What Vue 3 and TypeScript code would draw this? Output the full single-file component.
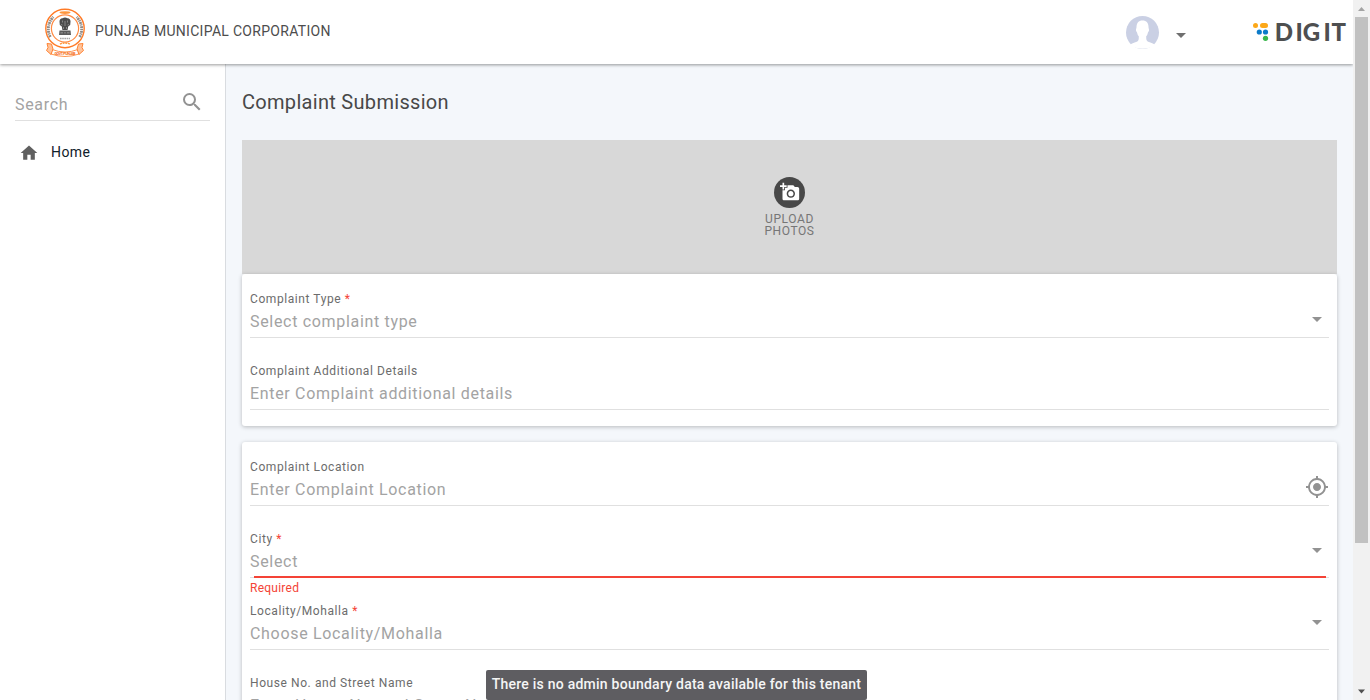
<script setup lang="ts">
interface Field {
  label: string
  placeholder: string
  required?: boolean
  icon?: 'caret' | 'locate'
  raised?: boolean
  error?: string
}

const cards: Field[][] = [
  [
    { label: 'Complaint Type', placeholder: 'Select complaint type', required: true, icon: 'caret' },
    { label: 'Complaint Additional Details', placeholder: 'Enter Complaint additional details' },
  ],
  [
    { label: 'Complaint Location', placeholder: 'Enter Complaint Location', icon: 'locate' },
    { label: 'City', placeholder: 'Select', required: true, icon: 'caret', raised: true, error: 'Required' },
    { label: 'Locality/Mohalla', placeholder: 'Choose Locality/Mohalla', required: true, icon: 'caret', raised: true },
    { label: 'House No. and Street Name', placeholder: 'Enter House No. and Street Name' },
  ],
]
</script>

<template>
  <div class="window">
    <div class="page">
      <header class="topbar">
        <svg class="emblem" width="42" height="50" viewBox="0 0 42 50">
          <circle cx="21" cy="20.5" r="19.2" fill="#fff" stroke="#ff7a26" stroke-width="1.4" />
          <circle cx="21" cy="20.5" r="13.6" fill="none" stroke="#ff8a42" stroke-width="1.2" />
          <path d="M6.300 29A17 17 0 0 1 9.400 9M35.700 29A17 17 0 0 0 32.600 9" fill="none" stroke="#8f8a86" stroke-width="2.800" stroke-dasharray="2 .7 1.200 .6" />
          <ellipse cx="21" cy="4.600" rx="5.500" ry="1.300" fill="#ff963c" />
          <path d="M16 36.200q5-2.400 10 0" fill="none" stroke="#ff963c" stroke-width="1.400" stroke-dasharray="2 .7" />
          <path d="M15.500 13.500q0-3 3-3.200q2.500-1.500 5 0q3 .2 3 3.200l-.3 3.500-2 1.500-.6 3.500h-5.200l-.6-3.500-2-1.500z" fill="#4c4c4c" />
          <path d="M18.500 12.500v2M23.500 12.500v2M21 13v5M17 16.500l1.500.5M25 16.500l-1.500.5M19.500 19v2M22.500 19v2" stroke="#a0a0a0" stroke-width=".7" fill="none" />
          <path d="M15.500 22.500h11l.5 4.500H15z" fill="#5a5a5a" />
          <path d="M16.500 24.800h2.500M20.200 24.800h1.600M23 24.800h2.500" stroke="#999" stroke-width=".9" />
          <path d="M16 30.500h10" stroke="#a7a7a7" stroke-width="1.500" stroke-dasharray="1.600 .6" />
          <path d="M8 41.500q13 5 26 0l1 4.500q-14 5-28 0z" fill="#fff" stroke="#ff8b3e" stroke-width=".9" />
          <path d="M3 35.500l4.500.5 1.500 5-2 5.500-4.500-4 1.500-3zM39 35.500l-4.500.5-1.500 5 2 5.500 4.500-4-1.500-3z" fill="#ffc49c" stroke="#ff7a26" stroke-width=".9" />
          <text x="21" y="47" text-anchor="middle" font-size="3.800" textLength="21" class="emblem-text">GOVT. PUNJAB</text>
        </svg>
        <span class="org">PUNJAB MUNICIPAL CORPORATION</span>
        <div class="account">
          <svg class="avatar" width="34" height="34" viewBox="0 0 34 34">
            <circle cx="16.500" cy="16.500" r="16.500" fill="#cad0e4" />
            <path d="M16.500 4.500c-4 0-6 2.700-6 6.500 0 1.500-.7 2-.5 3.500.2 1.300 1 1.500 1.200 2.500.4 2 1 2.700 1.600 3.300 0 3 0 4.700-2 5.500-3 1.200-5.500 1.500-6.800 3.200q5 3.800 12.500 3.800t12.500-3.800c-1.300-1.700-3.800-2-6.800-3.200-2-.8-2-2.500-2-5.500.6-.6 1.200-1.300 1.600-3.300.2-1 1-1.200 1.200-2.500.2-1.500-.5-2-.5-3.500 0-3.800-2-6.500-6-6.500z" fill="#fff" />
          </svg>
          <svg class="account-caret" width="10" height="5" viewBox="0 0 10 5"><path d="M0 0h10L5 5z" fill="#6f6f6f" /></svg>
        </div>
        <svg class="digit" width="98" height="32" viewBox="0 0 98 32">
          <g fill="#fca819"><circle cx="3.500" cy="9.500" r="2.500" /><rect x="8" y="7" width="8" height="5" rx="2.500" /></g>
          <g fill="#0c7bc9"><circle cx="7.300" cy="16" r="2.600" /><circle cx="13.500" cy="16" r="2.600" /></g>
          <circle cx="13.500" cy="22.300" r="2.600" fill="#38b74b" />
          <text x="22.700 43.400 50.800 71.400 79.600" y="24.500" class="digit-text">DIGIT</text>
        </svg>
      </header>

      <div class="body">
        <aside class="sidebar">
          <div class="search">
            <span>Search</span>
            <svg width="24" height="24" viewBox="0 0 24 24"><path fill="#929292" d="M15.500 14h-.79l-.28-.27A6.471 6.471 0 0 0 16 9.500 6.500 6.500 0 1 0 9.500 16c1.610 0 3.090-.59 4.230-1.570l.27.28v.79l5 4.990L20.490 19l-4.990-5zm-6 0C7.010 14 5 11.990 5 9.500S7.010 5 9.500 5 14 7.010 14 9.500 11.990 14 9.500 14z" /></svg>
          </div>
          <a class="nav-item">
            <svg width="20" height="20" viewBox="0 0 24 24"><path fill="#606060" d="M10 20v-6h4v6h5v-8h3L12 3 2 12h3v8z" /></svg>
            <span>Home</span>
          </a>
        </aside>

        <main class="content">
          <h1>Complaint Submission</h1>
          <div class="upload">
            <div class="upload-badge">
              <svg width="20" height="20" viewBox="0 0 24 24"><path fill="#fff" d="M3 4V1h2v3h3v2H5v3H3V6H0V4h3zm3 6V7h3V4h7l1.830 2H21c1.100 0 2 .9 2 2v12c0 1.100-.9 2-2 2H5c-1.100 0-2-.9-2-2V10h3zm7 9c2.760 0 5-2.240 5-5s-2.240-5-5-5-5 2.240-5 5 2.240 5 5 5zm-3.200-5c0 1.770 1.430 3.200 3.200 3.200s3.200-1.430 3.200-3.200-1.430-3.200-3.200-3.200-3.200 1.430-3.200 3.200z" /></svg>
            </div>
            <span>UPLOAD<br>PHOTOS</span>
          </div>
          <section v-for="(fields, i) in cards" :key="i" class="card">
            <div v-for="field in fields" :key="field.label" class="field" :class="{ invalid: field.error }">
              <div class="box">
                <label>{{ field.label }}<b v-if="field.required"> *</b></label>
                <div class="placeholder">{{ field.placeholder }}</div>
                <svg v-if="field.icon === 'caret'" class="caret" :class="{ raised: field.raised }" width="10" height="5" viewBox="0 0 10 5"><path d="M0 0h10L5 5z" fill="#929292" /></svg>
                <svg v-if="field.icon === 'locate'" class="locate" width="24" height="24" viewBox="0 0 24 24"><path fill="#929292" d="M12 8c-2.210 0-4 1.790-4 4s1.790 4 4 4 4-1.790 4-4-1.790-4-4-4zm8.940 3A8.994 8.994 0 0 0 13 3.060V1h-2v2.060A8.994 8.994 0 0 0 3.060 11H1v2h2.060A8.994 8.994 0 0 0 11 20.940V23h2v-2.060A8.994 8.994 0 0 0 20.940 13H23v-2h-2.060zM12 19c-3.870 0-7-3.130-7-7s3.130-7 7-7 7 3.130 7 7-3.130 7-7 7z" /></svg>
              </div>
              <div v-if="field.error" class="error">{{ field.error }}</div>
            </div>
          </section>
        </main>
      </div>
      <div class="toast">There is no admin boundary data available for this tenant</div>
    </div>

    <div class="scrollbar">
      <svg width="17" height="17" viewBox="0 0 17 17"><path d="M5 11l3.500-4L12 11z" fill="#a3a3a3" /></svg>
      <div class="thumb"></div>
      <svg width="17" height="17" viewBox="0 0 17 17"><path d="M5 6.500h7l-3.500 4z" fill="#505050" /></svg>
    </div>
  </div>
</template>

<style>
body { margin: 0; overflow: hidden; }
</style>

<style scoped>
.window {
  display: flex;
  width: 1370px;
  height: 700px;
  overflow: hidden;
  font-family: Roboto, sans-serif;
  background: #f4f7fb;
}
.page { position: relative; display: flex; flex-direction: column; width: 1353px; height: 700px; overflow: hidden; }
.topbar {
  position: relative;
  z-index: 2;
  box-sizing: border-box;
  display: flex;
  flex: none;
  align-items: center;
  height: 64px;
  padding: 0 3px 0 44px;
  background: #fff;
  box-shadow: 0 1px 3px rgba(0, 0, 0, .4);
}
.emblem { margin-top: 1px; }
.emblem-text { font-family: Roboto, sans-serif; font-weight: 700; fill: #f56a16; }
.org { margin: -2px 0 0 9px; font-size: 14px; letter-spacing: .3px; color: #4d4d4d; }
.account { display: flex; align-items: center; margin-left: auto; }
.avatar { margin-top: 2px; }
.account-caret { margin: 7px 0 0 16px; }
.digit { margin-left: 66px; overflow: visible; }
.digit-text { font-family: Lato, sans-serif; font-size: 24px; font-weight: 900; fill: #4e4f50; }
.body { display: flex; flex: none; height: 900px; }
.sidebar { box-sizing: border-box; width: 226px; padding: 16px 15px; border-right: 1px solid #d9dce0; background: #fff; }
.search {
  display: flex;
  align-items: center;
  justify-content: space-between;
  height: 40px;
  padding-right: 6px;
  border-bottom: 1px solid #e0e0e0;
  font-size: 16px;
  letter-spacing: .68px;
  color: #a3a3a3;
}
.search span { padding-top: 8px; }
.search svg { margin-top: 4px; }
.nav-item { display: flex; align-items: center; margin-top: 19px; padding-left: 4px; height: 24px; font-size: 14px; letter-spacing: .4px; color: #10202a; }
.nav-item svg { margin-top: 2px; }
.nav-item span { margin: -1px 0 0 12px; }
.content { width: 1095px; padding-left: 16px; }
h1 { margin: 26px 0; font-size: 20px; line-height: 24px; font-weight: 400; letter-spacing: .3px; color: #484848; }
.upload {
  display: flex;
  flex-direction: column;
  align-items: center;
  box-sizing: border-box;
  height: 134px;
  padding-top: 37px;
  background: #d8d8d8;
  font-size: 12px;
  line-height: 12px;
  letter-spacing: .6px;
  text-align: center;
  color: #767676;
}
.upload-badge { display: grid; place-items: center; width: 31px; height: 31px; margin-bottom: 5px; border-radius: 50%; background: #484848; }
.upload-badge svg { margin: -2px 0 0 0; }
.card {
  margin-bottom: 16px;
  padding: 0 8px 8px;
  border-radius: 3px;
  background: #fff;
  box-shadow: 0 1px 4px rgba(0, 0, 0, .25);
}
.field { height: 72px; }
.box { position: relative; box-sizing: border-box; height: 64px; padding-top: 17px; border-bottom: 1px solid #e0e0e0; }
label { display: block; font-size: 12px; line-height: 16px; letter-spacing: .58px; color: #6c6c6c; }
label b { font-weight: 400; color: #f44336; }
.placeholder { margin-top: 5px; font-size: 16px; line-height: 19px; letter-spacing: .68px; color: #a3a3a3; }
.caret { position: absolute; top: 43px; right: 7px; }
.caret.raised { top: 34px; }
.locate { position: absolute; top: 33px; right: 0; }
.invalid .box::after { content: ''; position: absolute; left: 4px; right: 3px; bottom: -1px; height: 2px; background: #f44336; }
.error { position: relative; z-index: 1; height: 8px; padding-top: 2px; box-sizing: border-box; font-size: 12px; line-height: 16px; letter-spacing: .25px; color: #f44336; }
.toast {
  position: absolute;
  left: 486px;
  top: 670px;
  z-index: 3;
  width: 381px;
  height: 30px;
  border-radius: 2px;
  background: #5e5d61;
  font-size: 14px;
  line-height: 28px;
  font-weight: 500;
  letter-spacing: .24px;
  text-align: center;
  white-space: nowrap;
  color: #f5f5f5;
}
.scrollbar { display: flex; flex-direction: column; width: 17px; height: 700px; background: #f1f1f1; }
.thumb { width: 13px; height: 526px; margin: 0 2px auto; background: #c1c1c1; }
</style>
